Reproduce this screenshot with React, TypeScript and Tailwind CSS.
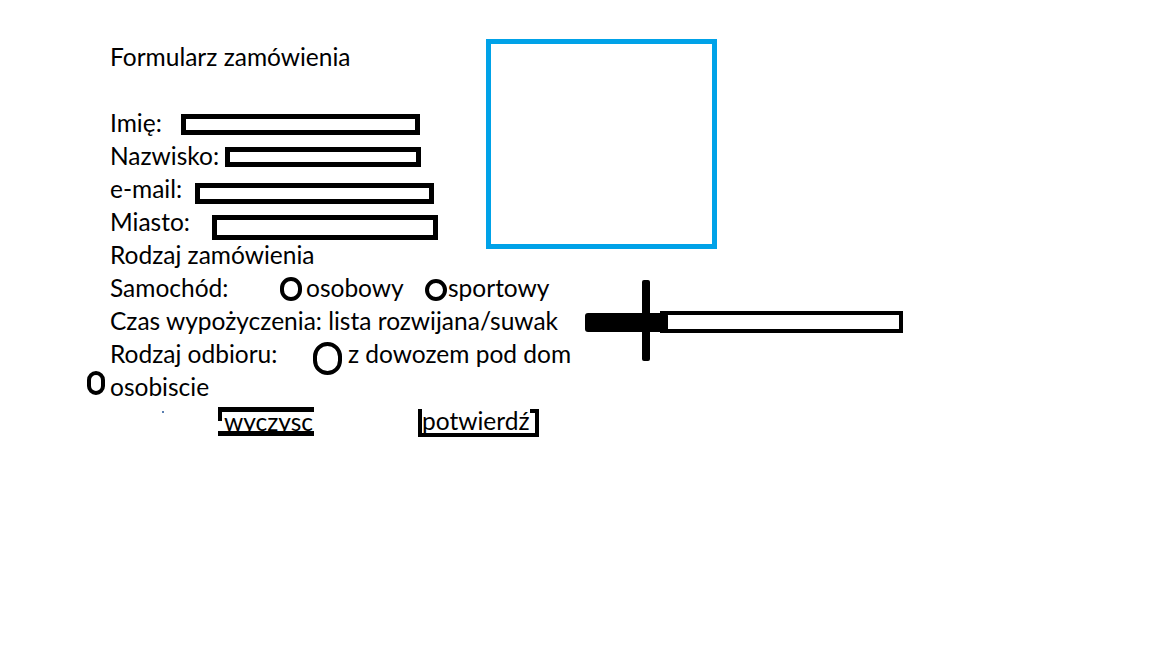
import React from "react";

export default function App() {
  return (
    <div
      className="w-[1152px] h-[648px] bg-white text-black text-[24.5px] leading-[33px] overflow-hidden"
      style={{ fontFamily: "Lato, 'Open Sans', sans-serif" }}
    >
      {/* top section */}
      <div className="flex items-start">
        <div className="w-[486px] pl-[110px] flex flex-col">
          <div className="h-[33px] mt-[40px] whitespace-nowrap">Formularz zamówienia</div>
          <div className="h-[33px]" />
          <div className="h-[33px] flex items-start">
            <span className="w-[71px] shrink-0">Imię:</span>
            <div className="w-[239px] h-[21px] mt-[8px] border-[5px] border-black" />
          </div>
          <div className="h-[33px] flex items-start">
            <span className="w-[115px] shrink-0">Nazwisko:</span>
            <div className="w-[196px] h-[20px] mt-[8px] border-[5px] border-black" />
          </div>
          <div className="h-[33px] flex items-start">
            <span className="w-[85px] shrink-0">e-mail:</span>
            <div className="w-[239px] h-[21px] mt-[11px] border-[5px] border-black" />
          </div>
          <div className="h-[33px] flex items-start">
            <span className="w-[102px] shrink-0">Miasto:</span>
            <div className="w-[226px] h-[25px] mt-[10px] border-[5px] border-black" />
          </div>
          <div className="h-[33px] whitespace-nowrap">Rodzaj zamówienia</div>
        </div>
        <div className="w-[231px] h-[210px] mt-[39px] border-[5px] border-[#00a2e8]" />
      </div>

      {/* Samochód */}
      <div className="h-[33px] pl-[110px] flex items-start">
        <span className="w-[170px] shrink-0">Samochód:</span>
        <div className="w-[22px] h-[24px] mt-[6px] rounded-full border-[4px] border-black shrink-0" />
        <span className="w-[123px] shrink-0 pl-[4px]">osobowy</span>
        <div className="w-[22px] h-[22px] mt-[8px] rounded-full border-[4px] border-black shrink-0" />
        <span className="pl-[1px]">sportowy</span>
      </div>

      {/* Czas wypożyczenia */}
      <div className="h-[33px] pl-[110px] flex items-start">
        <span className="w-[475px] shrink-0 whitespace-nowrap">
          Czas wypożyczenia: lista rozwijana/suwak
        </span>
        <div className="relative w-[318px] h-[22px] mt-[7px] flex items-center shrink-0">
          <div className="w-[83px] h-[19px] bg-black rounded-[3px]" />
          <div className="-ml-[8px] w-[243px] h-[22px] border-[4px] border-black" />
          <div className="absolute left-[57px] -top-[31px] w-[8px] h-[81px] bg-black rounded-[2px]" />
        </div>
      </div>

      {/* Rodzaj odbioru */}
      <div className="h-[33px] pl-[110px] flex items-start">
        <span className="w-[203px] shrink-0">Rodzaj odbioru:</span>
        <div className="w-[29px] h-[33px] mt-[5px] rounded-full border-[4px] border-black shrink-0" />
        <span className="pl-[6px] whitespace-nowrap">z dowozem pod dom</span>
      </div>

      {/* osobiscie */}
      <div className="h-[33px] pl-[87px] flex items-start">
        <div className="w-[18px] h-[24px] mt-[1px] rounded-full border-[4px] border-black shrink-0" />
        <span className="pl-[5px]">osobiscie</span>
      </div>

      {/* buttons */}
      <div className="h-[36px] flex items-start">
        <div className="ml-[162px] mt-[8px] w-[2px] h-[2px] bg-[#5a7fb0]" />
        <div className="ml-[54px] mt-[4px] relative w-[96px] h-[29px] border-t-[5px] border-b-[5px] border-r-[3px] border-black flex">
          <div className="absolute left-0 -top-[1px] w-[4px] h-[10px] bg-black" />
          <span className="ml-[6px] bg-white leading-[19px] pr-[2px] whitespace-nowrap">wyczysc</span>
        </div>
        <div className="ml-[104px] mt-[6px] w-[121px] h-[28px] border-[4px] border-black flex items-start">
          <span className="-mt-[4px] bg-white leading-[23px] whitespace-nowrap">potwierdź</span>
        </div>
      </div>
    </div>
  );
}
